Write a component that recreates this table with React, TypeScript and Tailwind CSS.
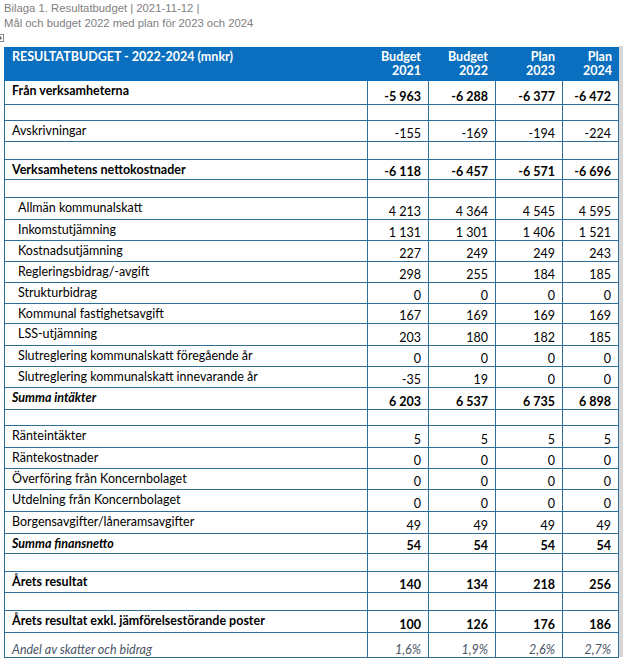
type Kind = 'head' | 'plain' | 'indent' | 'sum' | 'blank' | 'andel';

interface Row {
  label: string;
  vals?: string[];
  h: string;
  kind: Kind;
}

const rows: Row[] = [
  { label: 'Från verksamheterna', vals: ['-5 963', '-6 288', '-6 377', '-6 472'], h: 'h-[24px]', kind: 'head' },
  { label: '', h: 'h-[16px]', kind: 'blank' },
  { label: 'Avskrivningar', vals: ['-155', '-169', '-194', '-224'], h: 'h-[21px]', kind: 'plain' },
  { label: '', h: 'h-[18px]', kind: 'blank' },
  { label: 'Verksamhetens nettokostnader', vals: ['-6 118', '-6 457', '-6 571', '-6 696'], h: 'h-[20px]', kind: 'head' },
  { label: '', h: 'h-[18px]', kind: 'blank' },
  { label: 'Allmän kommunalskatt', vals: ['4 213', '4 364', '4 545', '4 595'], h: 'h-[22px]', kind: 'indent' },
  { label: 'Inkomstutjämning', vals: ['1 131', '1 301', '1 406', '1 521'], h: 'h-[21px]', kind: 'indent' },
  { label: 'Kostnadsutjämning', vals: ['227', '249', '249', '243'], h: 'h-[21px]', kind: 'indent' },
  { label: 'Regleringsbidrag/-avgift', vals: ['298', '255', '184', '185'], h: 'h-[21px]', kind: 'indent' },
  { label: 'Strukturbidrag', vals: ['0', '0', '0', '0'], h: 'h-[21px]', kind: 'indent' },
  { label: 'Kommunal fastighetsavgift', vals: ['167', '169', '169', '169'], h: 'h-[20px]', kind: 'indent' },
  { label: 'LSS-utjämning', vals: ['203', '180', '182', '185'], h: 'h-[22px]', kind: 'indent' },
  { label: 'Slutreglering kommunalskatt föregående år', vals: ['0', '0', '0', '0'], h: 'h-[21px]', kind: 'indent' },
  { label: 'Slutreglering kommunalskatt innevarande år', vals: ['-35', '19', '0', '0'], h: 'h-[21px]', kind: 'indent' },
  { label: 'Summa intäkter', vals: ['6 203', '6 537', '6 735', '6 898'], h: 'h-[22px]', kind: 'sum' },
  { label: '', h: 'h-[16px]', kind: 'blank' },
  { label: 'Ränteintäkter', vals: ['5', '5', '5', '5'], h: 'h-[22px]', kind: 'plain' },
  { label: 'Räntekostnader', vals: ['0', '0', '0', '0'], h: 'h-[21px]', kind: 'plain' },
  { label: 'Överföring från Koncernbolaget', vals: ['0', '0', '0', '0'], h: 'h-[21px]', kind: 'plain' },
  { label: 'Utdelning från Koncernbolaget', vals: ['0', '0', '0', '0'], h: 'h-[22px]', kind: 'plain' },
  { label: 'Borgensavgifter/låneramsavgifter', vals: ['49', '49', '49', '49'], h: 'h-[22px]', kind: 'plain' },
  { label: 'Summa finansnetto', vals: ['54', '54', '54', '54'], h: 'h-[20px]', kind: 'sum' },
  { label: '', h: 'h-[18px]', kind: 'blank' },
  { label: 'Årets resultat', vals: ['140', '134', '218', '256'], h: 'h-[21px]', kind: 'head' },
  { label: '', h: 'h-[18px]', kind: 'blank' },
  { label: 'Årets resultat exkl. jämförelsestörande poster', vals: ['100', '126', '176', '186'], h: 'h-[22px]', kind: 'head' },
  { label: 'Andel av skatter och bidrag', vals: ['1,6%', '1,9%', '2,6%', '2,7%'], h: 'h-[25px]', kind: 'andel' },
];

const colW = ['w-[61px]', 'w-[67px]', 'w-[67px]', 'w-[57px]'];

function labelClass(kind: Kind) {
  if (kind === 'head') return 'font-bold pl-[7px] pt-[2px]';
  if (kind === 'sum') return 'font-bold italic pl-[7px] pt-[2px]';
  if (kind === 'indent') return 'pl-[13px] pt-[2px]';
  if (kind === 'andel') return 'italic text-[#4a5566] pl-[7px] items-end';
  return 'pl-[7px] pt-[2px]';
}

function valueClass(kind: Kind) {
  if (kind === 'head' || kind === 'sum') return 'font-bold';
  if (kind === 'andel') return 'italic text-[#4a5566]';
  return '';
}

function TableRow({ row }: { row: Row }) {
  return (
    <div className={`flex ${row.h} border-b border-[#2f6e98]`}>
      <div className={`flex w-[363px] border-l border-[#2f6e98] ${labelClass(row.kind)}`}>
        <span className="leading-[15px] whitespace-nowrap">{row.label}</span>
      </div>
      {colW.map((w, i) => (
        <div
          key={i}
          className={`flex ${w} items-end justify-end border-l border-[#2f6e98] pr-[7px] ${
            i === 3 ? 'border-r' : ''
          } ${valueClass(row.kind)}`}
        >
          <span className="leading-[15px] whitespace-nowrap">{row.vals ? row.vals[i] : ''}</span>
        </div>
      ))}
    </div>
  );
}

export default function App() {
  return (
    <div className="relative h-[660px] w-[623px] overflow-hidden bg-white">
      {/* Document header */}
      <div className="pl-[4px] pt-[1px] font-['Liberation_Sans',Arial,sans-serif] text-[11.3px] leading-[15px] text-[#808080]">
        <div>Bilaga 1. Resultatbudget | 2021-11-12 |</div>
        <div>Mål och budget 2022 med plan för 2023 och 2024</div>
      </div>

      {/* Table move handle, partly off the left edge */}
      <svg className="absolute left-[-4px] top-[34px]" width="8" height="8" viewBox="0 0 8 8">
        <rect x="0.5" y="0.5" width="7" height="7" fill="#fff" stroke="#8a8a8a" />
        <path d="M4 2v4M2 4h4" stroke="#444" strokeWidth="1" />
      </svg>

      <div className="ml-[4px] mt-[16px] w-[615px] font-['Lato',sans-serif] text-[12.5px] text-black">
        {/* Title row */}
        <div className="flex h-[34px] bg-[#0a6fbe] font-bold text-white">
          <div className="w-[363px] pl-[8px] pt-[2px] leading-[15px]">RESULTATBUDGET - 2022-2024 (mnkr)</div>
          {[
            ['Budget', '2021'],
            ['Budget', '2022'],
            ['Plan', '2023'],
            ['Plan', '2024'],
          ].map(([a, b], i) => (
            <div key={i} className={`${colW[i]} pr-[7px] pt-[3px] text-right leading-[14px]`}>
              <div>{a}</div>
              <div>{b}</div>
            </div>
          ))}
        </div>

        {rows.map((r, i) => (
          <TableRow key={i} row={r} />
        ))}
      </div>

      {/* Page shadow on the right */}
      <div className="absolute right-0 top-[46px] h-[611px] w-[4px] bg-[#d6d6d6]" />
    </div>
  );
}
